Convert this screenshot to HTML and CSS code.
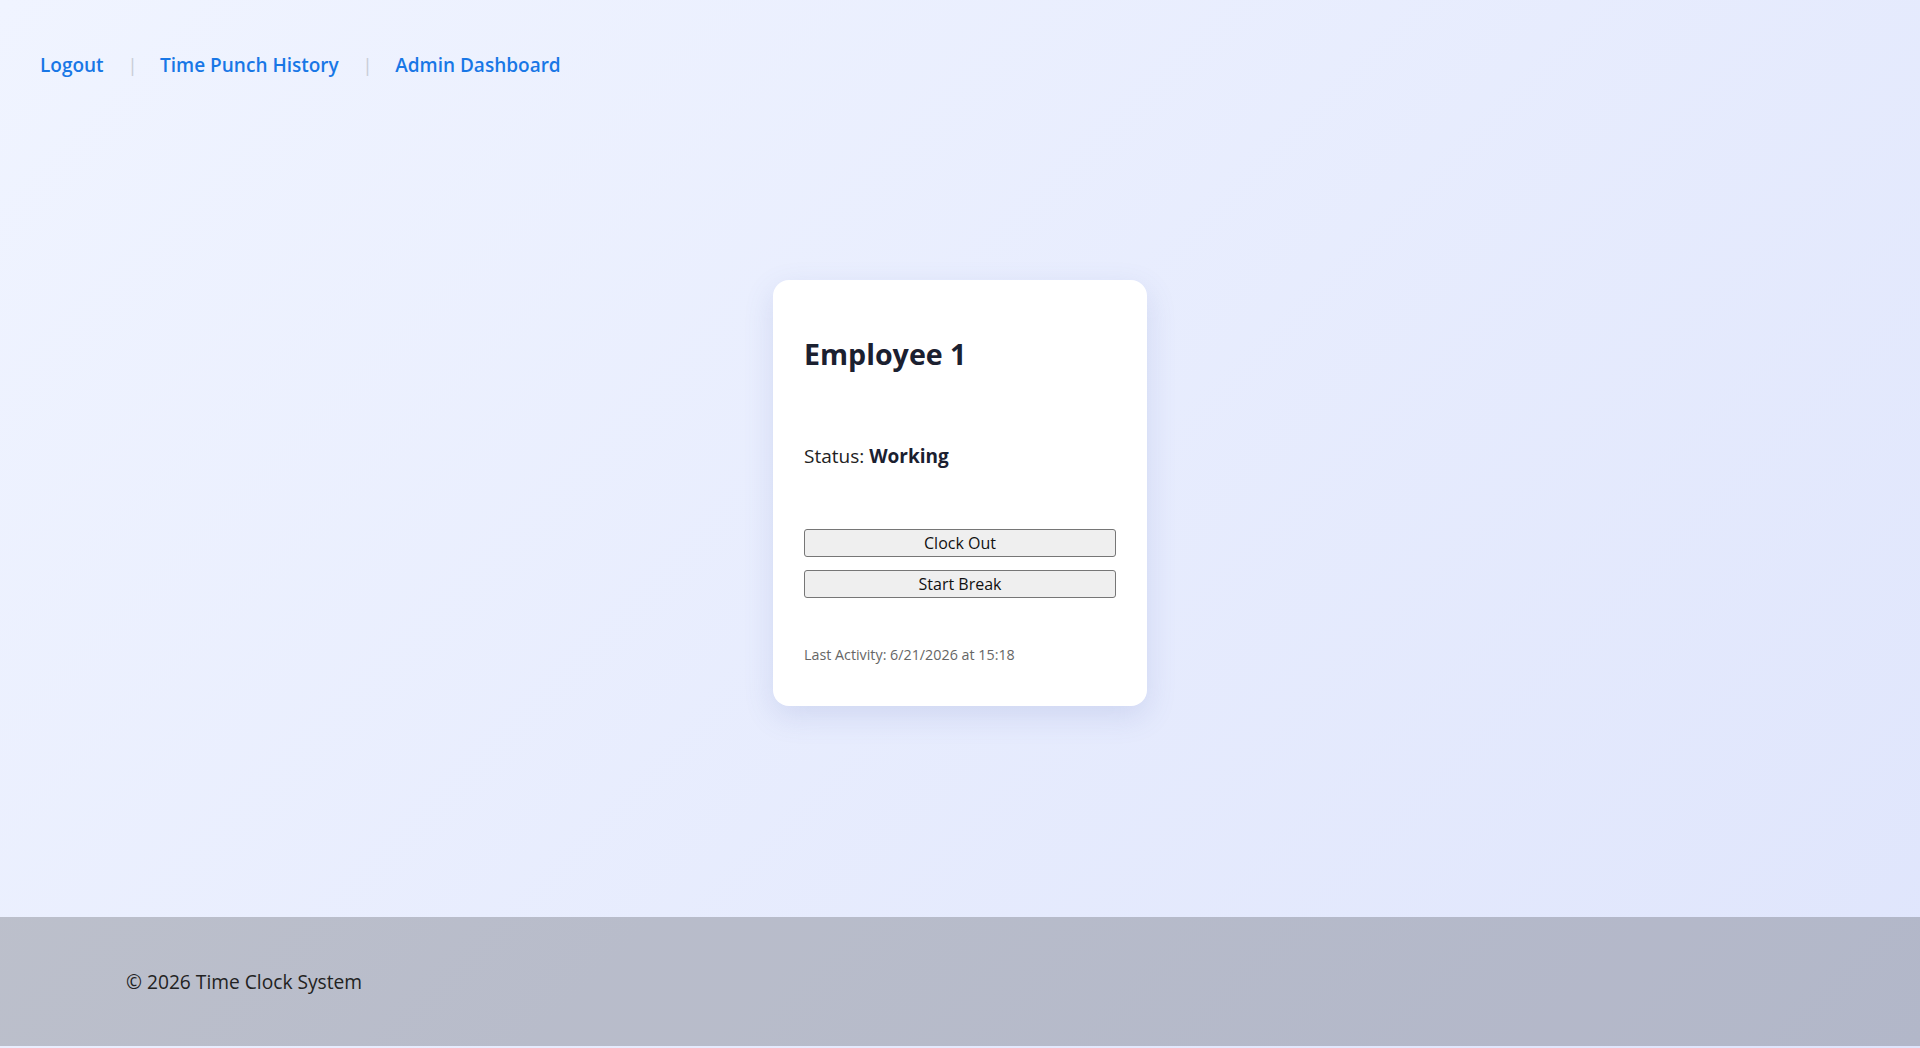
FILE: index.html
```html
<!DOCTYPE html>
<html lang="en">
<head>
<meta charset="utf-8">
<title>Time Clock</title>
<link rel="stylesheet" href="styles.css">
</head>
<body>
<div class="page">
  <nav class="topnav">
    <a class="navlink" href="#">Logout</a>
    <span class="sep">|</span>
    <a class="navlink" href="#">Time Punch History</a>
    <span class="sep">|</span>
    <a class="navlink" href="#">Admin Dashboard</a>
  </nav>
  <main class="main">
    <section class="card">
      <h2 class="emp-name">Employee 1</h2>
      <p class="status">Status: <strong>Working</strong></p>
      <div class="actions">
        <button class="btn" type="button">Clock Out</button>
        <button class="btn" type="button">Start Break</button>
      </div>
      <p class="last">Last Activity: 6/21/2026 at 15:18</p>
    </section>
  </main>
  <footer class="footer">
    <p class="copy">© 2026 Time Clock System</p>
  </footer>
</div>
</body>
</html>
```
FILE: styles.css
```css
html, body {
  margin: 0;
  padding: 0;
}
body {
  font-family: "Open Sans", "Noto Sans", sans-serif;
  background: linear-gradient(135deg, #f0f4ff 0%, #dfe5fc 100%);
  min-height: 1048px;
  color: #222;
}
.page {
  display: flex;
  flex-direction: column;
  min-height: 1046px;
}
.topnav {
  display: flex;
  align-items: center;
  height: 130px;
  padding-left: 40px;
  box-sizing: border-box;
}
.navlink {
  color: #1877e6;
  text-decoration: none;
  font-size: 19px;
  font-weight: 600;
}
.sep {
  color: #c9cdd6;
  font-size: 19px;
  margin: 0 22.5px 0 23.5px;
}
.main {
  flex: 1;
  display: flex;
  justify-content: center;
  align-items: flex-start;
  padding-top: 150px;
}
.card {
  width: 374px;
  box-sizing: border-box;
  background: #fff;
  border-radius: 16px;
  padding: 53px 31px 41px 31px;
  box-shadow: 0 10px 30px rgba(90, 105, 180, 0.16);
}
.emp-name {
  margin: 0;
  font-size: 28.6px;
  font-weight: 700;
  color: #1b2030;
  line-height: 41px;
}
.status {
  margin: 69px 0 0;
  font-size: 19px;
  line-height: 27px;
  color: #222;
}
.status strong {
  color: #1b2030;
  font-weight: 700;
}
.actions {
  display: flex;
  flex-direction: column;
  gap: 13px;
  margin-top: 59px;
}
.btn {
  display: block;
  width: 100%;
  height: 28px;
  box-sizing: border-box;
  background: #efefef;
  border: 1px solid #767676;
  border-radius: 3px;
  font-family: "Open Sans", "Noto Sans", sans-serif;
  font-size: 16px;
  color: #111;
  padding: 0;
}
.last {
  margin: 47px 0 0;
  font-size: 14.3px;
  line-height: 20px;
  color: #666;
}
.footer {
  height: 129px;
  background: rgba(0, 0, 0, 0.2);
  display: flex;
  align-items: center;
  padding-left: 126px;
}
.copy {
  margin: 0;
  font-size: 19.2px;
  color: #222;
}
```
